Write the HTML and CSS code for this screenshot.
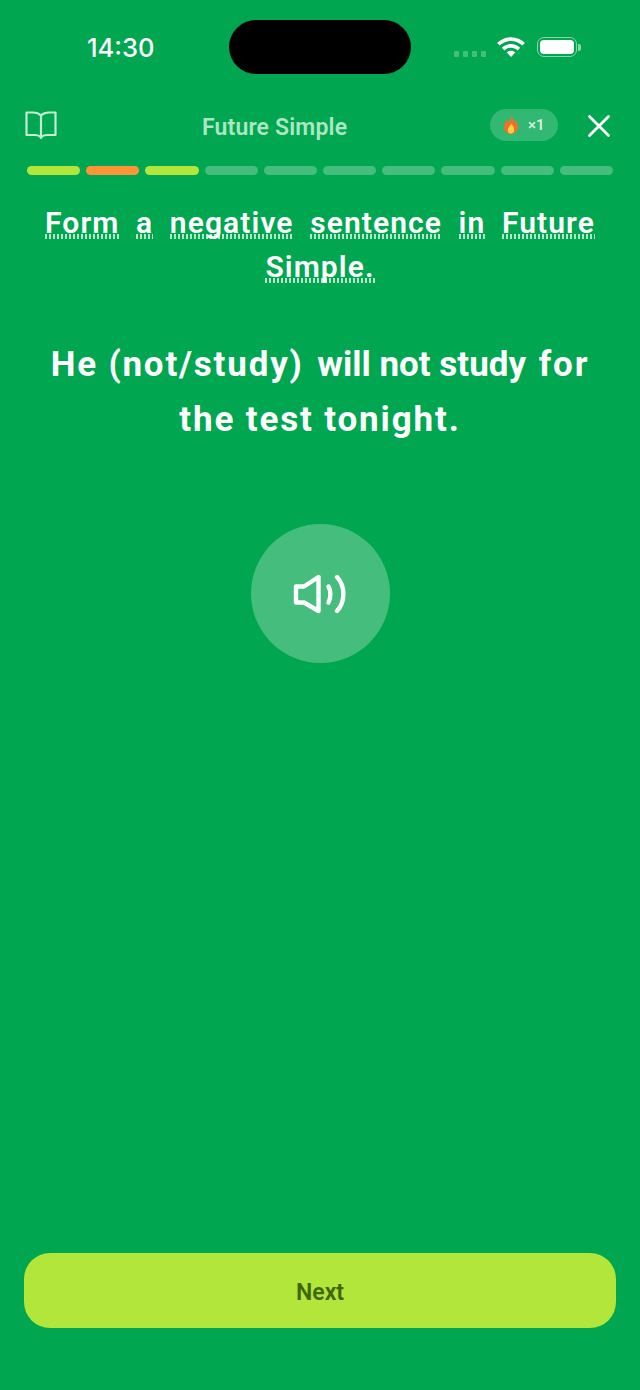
FILE: index.html
```html
<!DOCTYPE html>
<html lang="en">
<head>
<meta charset="utf-8">
<title>Future Simple</title>
<link rel="stylesheet" href="styles.css">
</head>
<body>
<main class="screen">
  <div class="status">
    <span class="time">14:30</span>
    <div class="island"></div>
    <div class="status-icons">
      <div class="signal"><i></i><i></i><i></i><i></i></div>
      <svg class="wifi" width="28" height="20" viewBox="3 3 22 16"><path d="M14 3.200c4.300 0 8.200 1.700 11.100 4.500l-2 2.100C20.700 7.500 17.500 6.100 14 6.100S7.300 7.500 4.900 9.800l-2-2.100C5.800 4.900 9.700 3.200 14 3.200zM14 8.600c2.800 0 5.400 1.100 7.300 3l-2 2.100c-1.400-1.400-3.300-2.200-5.300-2.200s-3.900.8-5.300 2.200l-2-2.100c1.900-1.900 4.500-3 7.300-3zM14 14c1.300 0 2.500.5 3.400 1.400L14 19l-3.400-3.600c.9-.9 2.100-1.400 3.400-1.400z" fill="#fff"/></svg>
      <div class="battery"><div class="battery-body"><div class="battery-fill"></div></div><div class="battery-cap"></div></div>
    </div>
  </div>

  <header class="topbar">
    <svg class="book" width="34" height="32" viewBox="0 0 34 32" fill="none" stroke="#c4ecd2" stroke-width="2.200" stroke-linejoin="round" stroke-linecap="round"><path d="M17 6.500C15 4.500 12.500 3.500 9 3.500H2.500v22.500H11c2.800 0 4.800.6 6 3 1.200-2.400 3.200-3 6-3h8.500V3.500H25c-3.500 0-6 1-8 3zM17 6.500v22.500"/></svg>
    <h1 class="lesson">Future Simple</h1>
    <div class="streak">
      <svg class="flame" width="16" height="18" viewBox="0 0 16 18"><path d="M8 0c.6 3-1 4.300-2.300 6C5 5.500 4.700 4.800 4.600 4 2.400 5.800 1 8.200 1 11c0 4 3 7 7 7s7-3 7-7c0-3-1.400-4.700-2.600-6.300-.2 1-.6 1.600-1.300 2C11 4.300 10.200 1.500 8 0z" fill="#f0702a"/><path d="M8 7.500c.3 1.800-3.200 3.600-3.200 6.500 0 2.100 1.400 3.600 3.200 3.600s3.200-1.500 3.200-3.600c0-2.700-1.800-4.400-3.200-6.500z" fill="#fdd04a"/></svg>
      <span class="count">×1</span>
    </div>
    <svg class="close" width="24" height="24" viewBox="0 0 24 24" fill="none" stroke="#fff" stroke-width="2.800" stroke-linecap="round"><path d="M2.500 2.500l19 19M21.500 2.500l-19 19"/></svg>
  </header>

  <div class="progress">
    <i class="seg lime"></i><i class="seg orange"></i><i class="seg lime"></i>
    <i class="seg"></i><i class="seg"></i><i class="seg"></i><i class="seg"></i><i class="seg"></i><i class="seg"></i><i class="seg"></i>
  </div>

  <section class="content">
    <h2 class="prompt"><span class="word">Form</span> <span class="word">a</span> <span class="word">negative</span> <span class="word">sentence</span> <span class="word">in</span> <span class="word">Future</span> <span class="word">Simple.</span></h2>
    <p class="sentence"><span class="loose">He (not/study)</span> <span class="tight">will not study</span> for<br>the test tonight.</p>
    <button class="speaker" type="button" aria-label="Play audio">
      <svg width="54" height="40" viewBox="0 0 54 40" fill="none" stroke="#fff" stroke-width="4.400" stroke-linecap="round" stroke-linejoin="round"><path d="M3 12.500H11L25.500 3V37L11 28.500H3z"/><path d="M35.500 12.500C38 16.500 38 24 35.500 28.500"/><path d="M44 3C52.500 12 52.500 28 44 37"/></svg>
    </button>
  </section>

  <div class="footer">
    <button class="next" type="button">Next</button>
  </div>
</main>
</body>
</html>
```
FILE: styles.css
```css
* { box-sizing: border-box; }
html, body { margin: 0; padding: 0; }
body { background: #00a650; font-family: Roboto, Inter, "Liberation Sans", sans-serif; color: #fff; }
.screen { width: 640px; height: 1390px; display: flex; flex-direction: column; overflow: hidden; }

.status { height: 95px; padding: 20px 58px 0 87px; display: flex; align-items: flex-start; }
.time { width: 142px; font-family: Inter, sans-serif; font-size: 25.500px; font-weight: 500; line-height: 56px; height: 54px; }
.island { width: 182px; height: 54px; background: #000; border-radius: 27px; }
.status-icons { margin-left: 43px; height: 54px; display: flex; align-items: center; }
.signal { display: flex; gap: 4px; margin-top: 13px; }
.signal i { width: 5px; height: 6px; border-radius: 1px; background: #45bd7c; }
.wifi { margin-left: 11px; margin-top: -1px; }
.battery { display: flex; align-items: center; margin-left: 12px; }
.battery-body { width: 40px; height: 20px; padding: 2px; border: 1.500px solid #8ad6a8; border-radius: 7px; }
.battery-fill { width: 100%; height: 100%; background: #fff; border-radius: 4px; }
.battery-cap { width: 3px; height: 7px; background: #8ad6a8; border-radius: 0 2px 2px 0; margin-left: 1px; }

.topbar { height: 64px; padding: 0 29px 0 24px; display: flex; align-items: center; }
.book { margin-bottom: 4px; }
.lesson { margin: 2px 0 0 144px; width: 146px; font-size: 23px; font-weight: 600; line-height: 30px; letter-spacing: .15px; color: #ade6c4; white-space: nowrap; }
.streak { margin: 0 0 4px 142px; width: 68px; height: 32px; border-radius: 16px; background: #33b873; display: flex; align-items: center; padding-left: 13px; gap: 9px; }
.count { font-size: 15px; font-weight: 600; color: #d2f1de; }
.close { margin: 0 0 3px 29px; }

.progress { margin: 7px 27px 0; display: flex; gap: 6px; }
.seg { flex: 1; height: 9px; border-radius: 5px; background: #45bd7c; }
.lime { background: #b2e63a; }
.orange { background: #ff9436; }

.content { flex: 1; display: flex; flex-direction: column; align-items: center; padding: 26px 30px 0; }
.prompt { margin: 0; width: 580px; text-align: center; font-size: 30px; font-weight: 600; line-height: 44px; letter-spacing: 1.100px; word-spacing: 8px; }
.word { background: repeating-linear-gradient(90deg, #b5e6c8 0 2px, transparent 2px 4px) left 0 bottom 1px / 100% 5px no-repeat; }
.sentence { margin: 48px 0 0; width: 580px; text-align: center; font-size: 35px; font-weight: 700; line-height: 55px; letter-spacing: 1.850px; }
.loose { letter-spacing: 1.800px; margin-right: 3px; }
.tight { letter-spacing: 0; margin-right: 2px; }
.speaker { margin-top: 77px; width: 139px; height: 139px; border: 0; border-radius: 50%; background: #45bd7c; display: flex; align-items: center; justify-content: center; padding: 0; }

.footer { padding: 0 24px 62px; }
.next { display: block; width: 592px; height: 75px; border: 0; border-radius: 26px; background: #b2e63a; color: #3f6600; padding: 5px 0 0; font: 600 23px/30px Roboto, Inter, sans-serif; }
```
